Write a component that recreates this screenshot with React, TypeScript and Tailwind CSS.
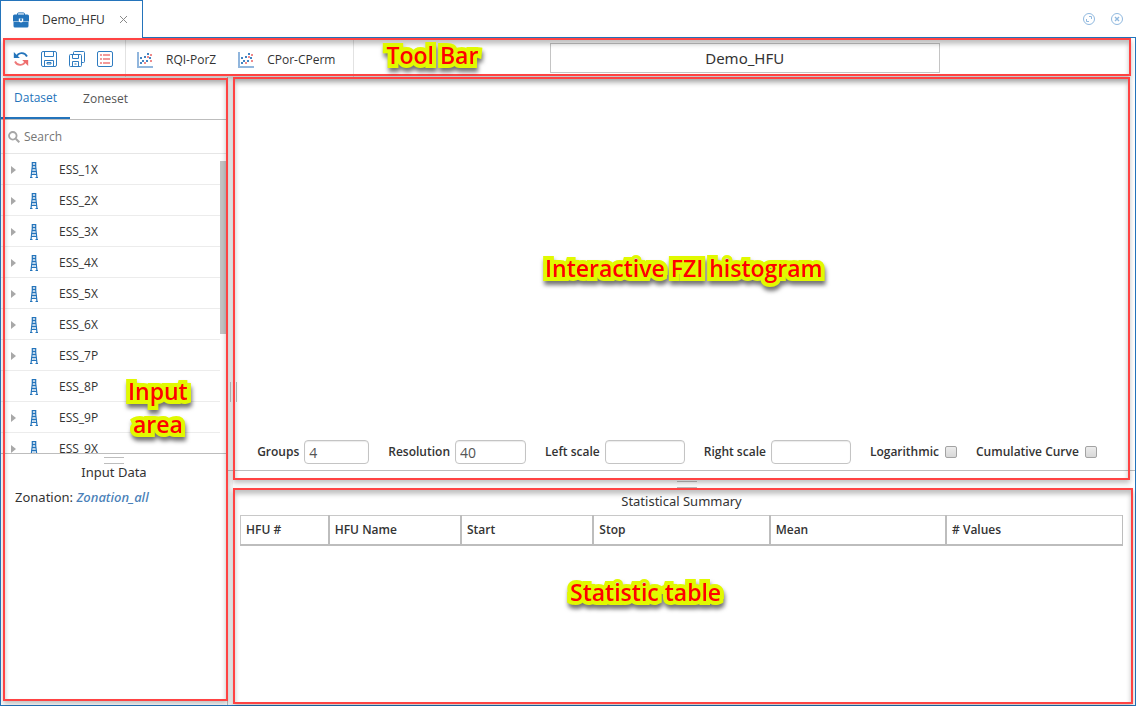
import type { ReactNode } from "react";

type Well = { name: string; expandable: boolean };

const wells: Well[] = [
  { name: "ESS_1X", expandable: true },
  { name: "ESS_2X", expandable: true },
  { name: "ESS_3X", expandable: true },
  { name: "ESS_4X", expandable: true },
  { name: "ESS_5X", expandable: true },
  { name: "ESS_6X", expandable: true },
  { name: "ESS_7P", expandable: true },
  { name: "ESS_8P", expandable: false },
  { name: "ESS_9P", expandable: true },
  { name: "ESS_9X", expandable: true },
];

const columns = [
  { label: "HFU #", width: "w-[10%]" },
  { label: "HFU Name", width: "w-[15%]" },
  { label: "Start", width: "w-[15%]" },
  { label: "Stop", width: "w-[20%]" },
  { label: "Mean", width: "w-[20%]" },
  { label: "# Values", width: "w-[20%]" },
];

function BriefcaseIcon() {
  return (
    <svg width="16" height="16" viewBox="0 0 16 16" aria-hidden="true">
      <path d="M4.500 3V2Q4.500.9 5.600.9h4.800q1.100 0 1.100 1.100v1" fill="none" stroke="#2474bb" strokeWidth="1" />
      <path d="M1.500 2.500h13Q16 2.500 16 4v5.500H0V4Q0 2.500 1.500 2.500z" fill="#2474bb" />
      <path d="M.5 10h15v4q0 1.500-1.500 1.500H2Q.5 15.500.5 14z" fill="#2474bb" />
      <path d="M5.800 6.500h4.400v1.800q0 2.200-2.200 2.200T5.800 8.300z" fill="#fff" />
      <path d="M7.200 6.500h1.600v1.700q0 .9-.8.9t-.8-.9z" fill="#2474bb" />
    </svg>
  );
}

function RefreshIcon() {
  return (
    <svg width="16" height="16" viewBox="0 0 16 16" aria-hidden="true">
      <path d="M3.500 6C5 1.300 11.500.6 14 5.500" fill="none" stroke="#2474bb" strokeWidth="1.800" />
      <path d="M.8 1v6h6z" fill="#2474bb" />
      <path d="M12.500 10C11 14.700 4.500 15.400 2 10.500" fill="none" stroke="#ee7a7a" strokeWidth="1.800" />
      <path d="M15.200 15V9h-6z" fill="#ee6b6b" />
    </svg>
  );
}

function SaveIcon() {
  return (
    <svg width="16" height="16" viewBox="0 0 16 16" fill="none" stroke="#2f7cc0" strokeWidth="1" aria-hidden="true">
      <rect x=".5" y=".5" width="15" height="15" rx="1.500" />
      <path d="M3.500.5v5h9v-5M3.500 15.500v-6h9v6" />
      <path d="M6 11.500h4v1.500H6z" />
    </svg>
  );
}

function SaveAllIcon() {
  return (
    <svg width="16" height="16" viewBox="0 0 16 16" fill="none" stroke="#2f7cc0" strokeWidth="1" aria-hidden="true">
      <path d="M4.500 3V1.500q0-1 1-1h9q1 0 1 1v9q0 1-1 1h-2" />
      <rect x=".5" y="3.500" width="12" height="12" rx="1" />
      <path d="M3.500 3.500v4h6v-4M3.500 15.500v-5h6v5M5.500 13h2" />
    </svg>
  );
}

function ListIcon() {
  return (
    <svg width="16" height="16" viewBox="0 0 16 16" fill="none" aria-hidden="true">
      <rect x=".5" y=".5" width="15" height="15" rx="1.500" stroke="#2f7cc0" strokeWidth="1" />
      <path d="M3 4h2M3 8h2M3 12h2M6 4h7M6 8h7M6 12h7" stroke="#f39a9a" strokeWidth="2" />
    </svg>
  );
}

function ScatterIcon() {
  return (
    <svg width="16" height="16" viewBox="0 0 16 16" aria-hidden="true">
      <path d="M1 0v15h15" fill="none" stroke="#91b6dd" strokeWidth="2" />
      <g fill="#4284c2">
        <rect x="3" y="5" width="2" height="2" />
        <rect x="3" y="10" width="2" height="2" />
        <rect x="5" y="8" width="2" height="2" />
        <rect x="7" y="4" width="2" height="2" />
        <rect x="9" y="8" width="2" height="2" />
        <rect x="10" y="1" width="2" height="2" />
        <rect x="12" y="5" width="2" height="2" />
      </g>
      <g fill="#f08a8a">
        <rect x="7" y="10" width="2" height="2" />
        <rect x="10" y="4" width="2" height="2" />
        <rect x="13" y="2" width="2" height="2" />
        <rect x="13" y="8" width="2" height="2" />
      </g>
    </svg>
  );
}

function DerrickIcon() {
  return (
    <svg width="8" height="16" viewBox="0 0 8 16" fill="none" stroke="#2474bb" aria-hidden="true">
      <path d="M2.300 0v4.500L1 15.500M5.700 0v4.500L7 15.500" strokeWidth="1.200" />
      <path d="M2 .5h4M2 3.500h4M2 6.500h4M1.500 9.500h5M1.500 12.500h5" strokeWidth="1" />
      <path d="M0 15.500h2.500M5.500 15.500H8" strokeWidth="1" />
      <path d="M2.500 1h3v12h-3z" fill="#2474bb" fillOpacity=".3" stroke="none" />
    </svg>
  );
}

function SearchIcon() {
  return (
    <svg width="12" height="12" viewBox="0 0 12 12" fill="none" stroke="#a6a6a6" aria-hidden="true">
      <circle cx="4.800" cy="4.800" r="3.800" strokeWidth="1.800" />
      <path d="M7.800 7.800l3.500 3.500" strokeWidth="2" />
    </svg>
  );
}

/* Red highlight frame drawn over a region */
function Frame({ className }: { className: string }) {
  return (
    <div
      className={`pointer-events-none absolute z-10 border-2 border-[#ff4343] shadow-[0_3px_5px_rgba(0,0,0,0.25),inset_0_4px_5px_rgba(0,0,0,0.25)] ${className}`}
    />
  );
}

function Callout({ className, children }: { className: string; children: ReactNode }) {
  return (
    <div
      className={`pointer-events-none absolute z-20 text-center text-[23px] leading-[33px] font-semibold whitespace-nowrap text-[#ff0000] drop-shadow-[1px_4px_2px_rgba(0,0,0,0.55)] [paint-order:stroke_fill] [-webkit-text-stroke:8px_#e1f900] ${className}`}
    >
      {children}
    </div>
  );
}

function NumberField({ id, label, value, width }: { id: string; label: string; value?: string; width: string }) {
  return (
    <div className="flex items-center gap-[5px]">
      <label htmlFor={id}>{label}</label>
      <input
        id={id}
        type="text"
        defaultValue={value}
        className={`h-6 rounded-[4px] border border-[#c4c4c4] px-1 text-[14px] font-normal text-[#555] shadow-[inset_0_1px_1px_rgba(0,0,0,0.08)] ${width}`}
      />
    </div>
  );
}

function CheckField({ id, label }: { id: string; label: string }) {
  return (
    <div className="flex items-center gap-[6px]">
      <label htmlFor={id}>{label}</label>
      <input
        id={id}
        type="checkbox"
        className="size-3 appearance-none rounded-[2px] border border-[#a3a3a3] bg-linear-to-b from-[#ececec] to-[#d8d8d8]"
      />
    </div>
  );
}

export default function App() {
  return (
    <div className="flex h-screen flex-col bg-white font-['Open_Sans','Noto_Sans',sans-serif] text-[12px] leading-4 text-[#333]">
      <header className="flex h-[37px] shrink-0 items-center justify-between pr-3">
        <div className="z-10 -mb-px flex h-[38px] items-center border border-b-0 border-[#2474bb] bg-white pr-[14px] pl-3">
          <BriefcaseIcon />
          <span className="ml-[13px]">Demo_HFU</span>
          <button type="button" aria-label="Close tab" className="ml-[14px]">
            <svg width="9" height="9" viewBox="0 0 9 9" stroke="#888" strokeWidth="1">
              <path d="M1 1l7 7M8 1L1 8" />
            </svg>
          </button>
        </div>
        <div className="flex gap-[14px]">
          <button type="button" aria-label="Expand">
            <svg width="14" height="14" viewBox="0 0 14 14" fill="none" stroke="#91b9df">
              <circle cx="7" cy="7" r="5.500" />
              <path d="M7 4.500h2.500V7M4.500 7v2.500H7" />
            </svg>
          </button>
          <button type="button" aria-label="Close">
            <svg width="14" height="14" viewBox="0 0 14 14" fill="none" stroke="#91b9df">
              <circle cx="7" cy="7" r="5.500" />
              <path d="M5 5l4 4M9 5L5 9" strokeWidth="1.400" />
            </svg>
          </button>
        </div>
      </header>

      <main className="flex min-h-0 flex-1 flex-col border border-[#2474bb]">
        <div className="relative flex h-[39px] shrink-0 items-stretch">
          <Frame className="top-0 right-1 bottom-px left-0.5" />
          <div className="flex items-center gap-3 border-r border-[#e2e2e2] px-3 pt-0.5">
            <button type="button" aria-label="Reload"><RefreshIcon /></button>
            <button type="button" aria-label="Save"><SaveIcon /></button>
            <button type="button" aria-label="Save as"><SaveAllIcon /></button>
            <button type="button" aria-label="Properties"><ListIcon /></button>
          </div>
          <div className="flex items-center border-r border-[#e2e2e2] pt-1 pr-[7px]">
            <button type="button" className="flex items-center gap-[13px] px-[11px]">
              <ScatterIcon />
              RQI-PorZ
            </button>
            <button type="button" className="flex items-center gap-[13px] px-[11px]">
              <ScatterIcon />
              CPor-CPerm
            </button>
          </div>
          <div className="relative flex flex-1 items-center justify-center pt-px">
            <Callout className="top-px left-8">Tool Bar</Callout>
            <input
              type="text"
              aria-label="Name"
              defaultValue="Demo_HFU"
              className="h-[30px] w-1/2 border border-[#c4c4c4] text-center font-['Noto_Sans',sans-serif] text-[15px]"
            />
          </div>
        </div>

        <div className="flex min-h-0 flex-1">
          <aside className="relative flex w-[226px] shrink-0 flex-col">
            <Frame className="top-px -right-px bottom-1 left-0.5" />
            <Callout className="top-[298px] left-[127px]">
              Input
              <br />
              area
            </Callout>
            <div role="tablist" className="flex h-[43px] shrink-0 border-b border-[#bdbdbd]">
              <button type="button" role="tab" aria-selected="true" className="border-b-2 border-[#2474bb] px-[13px] pt-0.5 text-[#2474bb]">
                Dataset
              </button>
              <button type="button" role="tab" aria-selected="false" className="px-[13px] pt-0.5 text-[#555]">
                Zoneset
              </button>
            </div>
            <label className="flex h-[34px] shrink-0 items-center gap-1 border-b border-[#e6e6e6] pl-[7px]">
              <SearchIcon />
              <input type="text" placeholder="Search" aria-label="Search" className="w-40 placeholder:text-[#757575]" />
            </label>
            <div className="flex h-[299px] shrink-0 overflow-hidden">
              <ul className="flex-1">
                {wells.map((well) => (
                  <li key={well.name} className="flex h-[31px] items-center border-b border-[#ececec] pt-px pl-[10px]">
                    <svg width="5" height="8" viewBox="0 0 5 8" aria-hidden="true">
                      {well.expandable && <path d="M0 0l5 4-5 4z" fill="#a8a8a8" />}
                    </svg>
                    <span className="ml-[14px]"><DerrickIcon /></span>
                    <span className="ml-[21px]">{well.name}</span>
                  </li>
                ))}
              </ul>
              <div className="w-[7px] pt-[7px]">
                <div className="h-[173px] bg-[#c3c3c3]" />
              </div>
            </div>
            <div className="flex flex-1 flex-col border-t border-[#bdbdbd] font-['Noto_Sans',sans-serif] text-[13px]">
              <div className="mx-auto mt-[3px] h-[7px] w-5 border-y border-[#bdbdbd]" />
              <h2 className="text-center">Input Data</h2>
              <p className="mt-[9px] pl-[14px]">
                Zonation: <a href="#zonation" className="font-medium text-[#4a7fb8] italic">Zonation_all</a>
              </p>
            </div>
          </aside>

          <div className="flex w-[11px] shrink-0 items-center justify-center border-l border-[#bdbdbd] bg-linear-to-r from-[#f4f4f4] from-50% to-white to-50%">
            <div className="mt-0.5 h-5 w-[7px] border-x border-[#bdbdbd]" />
          </div>

          <div className="flex min-w-0 flex-1 flex-col">
            <section className="relative -ml-[11px] flex flex-1 flex-col justify-end border-b border-[#bdbdbd] pb-[6px]">
              <Frame className="top-0 right-[5px] -bottom-[10px] left-[6px]" />
              <Callout className="top-[175px] left-[318px]">Interactive FZI histogram</Callout>
              <form className="flex items-center justify-center gap-[19px] pr-2 font-semibold">
                <NumberField id="groups" label="Groups" value="4" width="w-[65px]" />
                <NumberField id="resolution" label="Resolution" value="40" width="w-[71px]" />
                <NumberField id="left-scale" label="Left scale" width="w-20" />
                <NumberField id="right-scale" label="Right scale" width="w-20" />
                <CheckField id="logarithmic" label="Logarithmic" />
                <CheckField id="cumulative" label="Cumulative Curve" />
              </form>
            </section>
            <section className="relative -ml-[11px] h-[234px] shrink-0 pt-[10px] pr-3 pl-[13px]">
              <Frame className="top-[17px] right-0.5 bottom-px left-[6px]" />
              <Callout className="top-[105px] left-[343px]">Statistic table</Callout>
              <div className="pl-[11px]">
                <div className="mx-auto h-[7px] w-5 border-y border-[#bdbdbd]" />
              </div>
              <h2 className="mt-[5px] mb-[6px] text-center font-['Noto_Sans',sans-serif] text-[13px]">Statistical Summary</h2>
              <table className="w-full table-fixed border-collapse border border-[#c8c8c8]">
                <thead>
                  <tr className="h-[29px] border-b-2 border-[#bdbdbd]">
                    {columns.map((column) => (
                      <th
                        key={column.label}
                        scope="col"
                        className={`border-r-2 border-[#bdbdbd] px-[5px] text-left font-semibold last:border-r ${column.width}`}
                      >
                        {column.label}
                      </th>
                    ))}
                  </tr>
                </thead>
              </table>
            </section>
          </div>
        </div>
      </main>
    </div>
  );
}
